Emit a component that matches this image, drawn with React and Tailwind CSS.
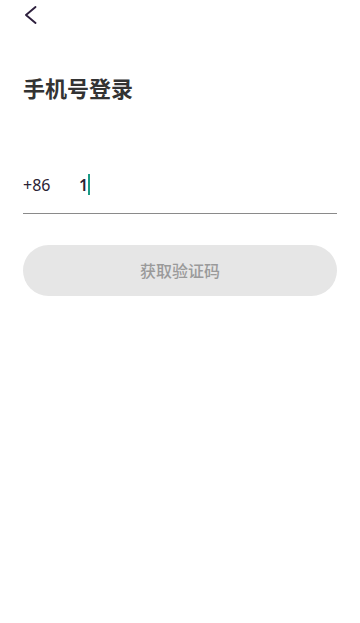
export default function App() {
  return (
    <main
      className="min-h-screen w-[360px] bg-white"
      style={{ fontFamily: '"Noto Sans", "Noto Sans CJK SC", sans-serif' }}
    >
      <header className="flex h-[30px] items-center pl-[24px]">
        <svg width="13" height="18" viewBox="0 0 13 18" fill="none" className="text-[#2d1f3d]">
          <polyline points="11.5,1 2,9 11.5,17" stroke="currentColor" strokeWidth="1.9" strokeLinecap="round" strokeLinejoin="round" />
        </svg>
      </header>

      <section className="px-[23px]">
        <h1 className="mt-[43px] text-[22px] leading-[30px] font-semibold text-[#333]">手机号登录</h1>

        <div className="mt-[65px] flex h-[46px] items-center border-b-[1.5px] border-[#8a8a8a] pb-[12px]">
          <span className="w-[56px] text-[16px] text-[#2a2235]">+86</span>
          <span className="text-[16px] font-semibold text-[#2a2235]">1</span>
          <span className="h-[21px] w-[2px] bg-[#1a9a84]" />
        </div>

        <button
          type="button"
          className="mt-[31px] flex h-[51px] w-full items-center justify-center rounded-full bg-[#e6e6e6] text-[16px] font-medium text-[#9a9a9a]"
        >
          获取验证码
        </button>
      </section>
    </main>
  )
}
